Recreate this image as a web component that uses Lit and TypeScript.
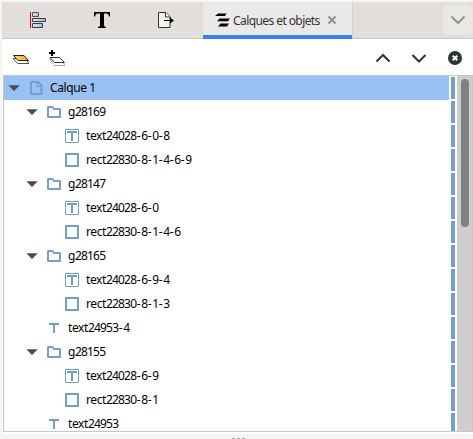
import { LitElement, html, css, svg, nothing } from "lit";
import { customElement, property } from "lit/decorators.js";

type Kind = "layer" | "group" | "textbox" | "rect" | "text";
interface Item { label: string; kind: Kind; depth: number; }

const ITEMS: Item[] = [
  { label: "Calque 1", kind: "layer", depth: 0 },
  { label: "g28169", kind: "group", depth: 1 },
  { label: "text24028-6-0-8", kind: "textbox", depth: 2 },
  { label: "rect22830-8-1-4-6-9", kind: "rect", depth: 2 },
  { label: "g28147", kind: "group", depth: 1 },
  { label: "text24028-6-0", kind: "textbox", depth: 2 },
  { label: "rect22830-8-1-4-6", kind: "rect", depth: 2 },
  { label: "g28165", kind: "group", depth: 1 },
  { label: "text24028-6-9-4", kind: "textbox", depth: 2 },
  { label: "rect22830-8-1-3", kind: "rect", depth: 2 },
  { label: "text24953-4", kind: "text", depth: 1 },
  { label: "g28155", kind: "group", depth: 1 },
  { label: "text24028-6-9", kind: "textbox", depth: 2 },
  { label: "rect22830-8-1", kind: "rect", depth: 2 },
  { label: "text24953", kind: "text", depth: 1 },
];

const GLYPHS = {
  layer: svg`<path d="M3 2h7l3.500 3.500V14H3z" fill="none" stroke="#729fcf" stroke-width="2" stroke-linejoin="round"/><path d="M9 2.500V6.500H13" fill="none" stroke="#729fcf"/>`,
  group: svg`<path d="M2 3h4.500l1.500 2h6v8H2z" fill="none" stroke="#729fcf" stroke-width="2" stroke-linejoin="round"/>`,
  textbox: svg`<path d="M1.500 1.500h13v13h-13z" fill="none" stroke="#729fcf"/><path d="M3 3h10v2H9v8H7V5H3z" fill="#729fcf"/>`,
  rect: svg`<path d="M2 2h12v12H2z" fill="none" stroke="#729fcf" stroke-width="2"/>`,
  text: svg`<path d="M3 3h10v2H9v8H7V5H3z" fill="#729fcf"/>`,
};

@customElement("tree-row")
class TreeRow extends LitElement {
  @property({ attribute: false }) item!: Item;
  static styles = css`
    :host { display: flex; height: 24px; flex: none; }
    .main { display: flex; align-items: center; width: 445px; box-sizing: border-box; }
    .main.d0 { padding-left: 2px; background: #99c1f1; }
    .main.d1 { padding-left: 20px; }
    .main.d2 { padding-left: 38px; }
    .twist { width: 16px; height: 16px; margin-right: 6px; }
    .twist path { fill: #4b4b4b; }
    .kind { width: 16px; height: 16px; margin-right: 6px; }
    .label { white-space: pre; line-height: 24px; letter-spacing: -0.4px; }
    .num { letter-spacing: -0.82px; }
    .dash { letter-spacing: 0.6px; margin-left: 0.5px; }
    .bar { width: 4px; height: 22px; margin: 1px 0 0 2px; background: #729fcf; }
  `;
  render() {
    const { label, kind, depth } = this.item;
    const open = kind === "layer" || kind === "group";
    const parts = label.split(/(\d+|-)/).filter(Boolean);
    return html`
      <div class="main d${depth}">
        <svg class="twist" viewBox="0 0 16 16">${open ? svg`<path d="M2.300 5.200h11.500L8 10.900z"/>` : nothing}</svg>
        <svg class="kind" viewBox="0 0 16 16">${GLYPHS[kind]}</svg>
        <span class="label">${parts.map((p) => html`<span class=${p === "-" ? "dash" : /\d/.test(p) ? "num" : "word"}>${p}</span>`)}</span>
      </div>
      <div class="bar"></div>`;
  }
}

@customElement("app-root")
class AppRoot extends LitElement {
  static styles = css`
    :host {
      display: flex; flex-direction: column; box-sizing: border-box; width: 473px; height: 439px;
      padding: 2px 0 0 2px; background: #f6f5f4; overflow: hidden;
      font: 12px "Noto Sans", "Open Sans", sans-serif; color: #000;
    }
    svg { display: block; flex: none; }
    .tabs { display: flex; height: 37px; flex: none; background: #e1dedb; box-shadow: inset 0 -1px #cdc7c2; }
    .tab { width: 56px; display: flex; align-items: center; justify-content: center; box-sizing: border-box; padding-bottom: 1px; }
    .tab.first { width: 72px; }
    .tab.third { width: 73px; padding-right: 1px; }
    .active {
      display: flex; align-items: center; width: 150px; box-sizing: border-box; background: #ebe9e7;
      border-right: 1px solid #d5d0cc;
      box-shadow: inset 0 -4px #3584e4; padding: 0 0 1px 12px;
    }
    .title { color: #2e3436; letter-spacing: -0.58px; margin-left: 2px; width: 94px; white-space: nowrap; }
    .more {
      width: 30px; height: 30px; margin: 3px 0 0 auto; border-radius: 5px; background: #e9e8e5;
      display: flex; align-items: center; justify-content: center; box-shadow: inset 0 0 0 1px #e6e3e0;
    }
    .tools { display: flex; align-items: center; height: 36px; box-sizing: border-box; flex: none; background: #fff; padding: 2px 10px 0 11px; }
    .add { margin-left: 20px; }
    .up { margin-left: auto; }
    .down, .clear { margin-left: 20px; }
    .body { height: 359px; flex: none; background: #fff; padding-left: 1px; box-sizing: border-box; }
    .frame {
      display: flex; height: 357px; box-sizing: border-box; border: solid #c9c6c3;
      border-width: 1px 0 1px 1px; overflow: hidden;
    }
    .list { width: 453px; flex: none; display: flex; flex-direction: column; }
    .track { width: 15px; border-right: 1px solid #cdc7c2; background: #cecece; padding-top: 3px; }
    .thumb { width: 8px; height: 148px; margin-left: 4px; border-radius: 4px; background: #7e8281; }
    .grip { display: flex; gap: 2px; padding: 4px 0 0 230px; }
    .grip i { width: 3px; height: 2px; background: #aaa9a8; }
  `;
  render() {
    return html`
      <div class="tabs">
        <div class="tab first">
          <svg width="16" height="16" viewBox="0 0 16 16"><defs><linearGradient id="b"><stop stop-color="#d9e7f2"/><stop offset="1" stop-color="#a5bfd8"/></linearGradient></defs><path d="M.5 0v16" stroke="#d40000"/><g fill="url(#b)" stroke="#333c43"><path d="M2.500.5h6v4h-6z" stroke="#555"/><path d="M2.500 6.500h13v3h-13z"/><path d="M2.500 11.500h10v4h-10z"/></g></svg>
        </div>
        <div class="tab">
          <svg width="16" height="16" viewBox="0 0 16 16"><path d="M0 0h16v4.500h-1Q14.500 1.500 12 1.500h-2V13q0 2 2 2v1H4v-1q2 0 2-2V1.500H4Q1.500 1.500 1 4.500H0z"/></svg>
        </div>
        <div class="tab third">
          <svg width="16" height="16" viewBox="0 0 16 16"><path d="M.5.5h7.500l4 4v11H.5z" fill="#f3f3f1" stroke="#333"/><path d="M7.500.5v4.500h4.500" fill="#fff" stroke="#333"/><path d="M6 8.500h8" stroke="#000"/><path d="M12 5.500l4 3-4 3z"/></svg>
        </div>
        <div class="active">
          <svg width="16" height="14" viewBox="0 0 16 14"><path d="M3 .5h8.500l-1.500 2.500H0zM4.500 5.500H15l-2 2.700H2zM5.500 10.500H14l-2 3H3z"/></svg>
          <span class="title">Calques et objets</span>
          <svg width="10" height="10" viewBox="0 0 10 10"><path d="M1.500 1.500l7 7M8.500 1.500l-7 7" stroke="#929594" stroke-width="2.200"/></svg>
        </div>
        <div class="more"><svg width="16" height="10" viewBox="0 0 16 10"><path d="M1.500 1.500L8 8l6.500-6.500" fill="none" stroke="#929594" stroke-width="2"/></svg></div>
      </div>
      <div class="tools">
        <svg width="16" height="16" viewBox="0 0 16 16"><path d="M0 8.500l4.500 5H16l-4-5z" fill="#fff" stroke="#555"/><path d="M.5 5.500h10.500l4.500 5H5z" fill="#fcb91b" stroke="#222"/><path d="M2 6.300h4L9 9.500H5z" fill="#ffd76c"/></svg>
        <svg class="add" width="16" height="16" viewBox="0 0 16 16"><path d="M1 9.500l4.500 6H16l-4-6z" fill="#fff" stroke="#aaa"/><path d="M1 7.500h9.500l5 5H5.500z" fill="#fff" stroke="#333"/><path d="M3 0v6M0 3h6" stroke="#000" stroke-width="2"/></svg>
        <svg class="up" width="16" height="16" viewBox="0 0 16 16"><path d="M1.500 11.500L8 5l6.500 6.500" fill="none" stroke="#2e3436" stroke-width="2"/></svg>
        <svg class="down" width="16" height="16" viewBox="0 0 16 16"><path d="M1.500 5L8 11.500 14.500 5" fill="none" stroke="#2e3436" stroke-width="2"/></svg>
        <svg class="clear" width="16" height="16" viewBox="0 0 16 16"><circle cx="8" cy="8" r="7" fill="#2e3436"/><path d="M5.700 5.700l4.600 4.600M10.300 5.700l-4.600 4.600" stroke="#fff" stroke-width="2"/></svg>
      </div>
      <div class="body">
        <div class="frame">
          <div class="list">${ITEMS.map((i) => html`<tree-row .item=${i}></tree-row>`)}</div>
          <div class="track"><div class="thumb"></div></div>
        </div>
      </div>
      <div class="grip"><i></i><i></i><i></i></div>`;
  }
}
